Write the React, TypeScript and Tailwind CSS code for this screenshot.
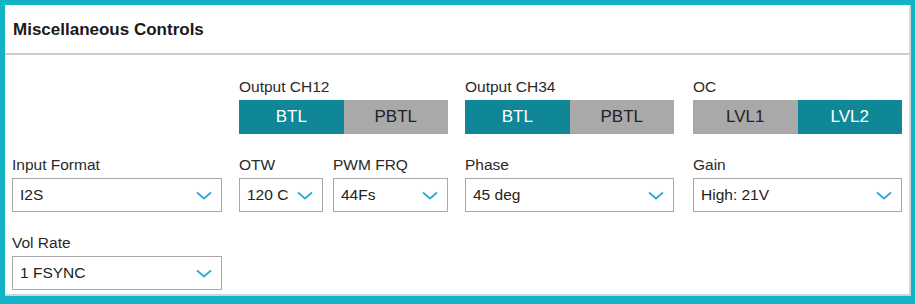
import React from "react";

const font = { fontFamily: '"Liberation Sans", Arial, sans-serif' };

function Chevron() {
  return (
    <svg width="16" height="9" viewBox="0 0 16 9" className="shrink-0">
      <path d="M1 1.5 L8 7.5 L15 1.5" fill="none" stroke="#2ea8dd" strokeWidth="1.8" />
    </svg>
  );
}

function Select({ value, w }: { value: string; w: string }) {
  return (
    <div className={`${w} h-[34px] border border-[#a8a8a8] bg-white flex items-center justify-between pl-[7px] pr-[9px] text-[15.5px] text-[#222]`}>
      <span>{value}</span>
      <Chevron />
    </div>
  );
}

function Label({ children }: { children: React.ReactNode }) {
  return <div className="h-[18px] leading-[18px] text-[15.5px] text-[#2a2a2a] mb-[4px]">{children}</div>;
}

function Toggle({ a, b, active }: { a: string; b: string; active: 0 | 1 }) {
  const on = "bg-[#0f8796] text-white";
  const off = "bg-[#a9a9a9] text-[#222]";
  return (
    <div className="flex h-[34px] w-[209px] text-[17px]">
      <div className={`flex-1 flex items-center justify-center ${active === 0 ? on : off}`}>{a}</div>
      <div className={`flex-1 flex items-center justify-center ${active === 1 ? on : off}`}>{b}</div>
    </div>
  );
}

export default function App() {
  return (
    <div style={font} className="w-[915px] h-[304px] bg-[#12b3c4] pt-[5px] pl-[5px] pr-[4px] pb-[8px]">
      <div className="w-full h-full bg-white border-r-2 border-b-2 border-[#cfd6d8] flex flex-col">
        <div className="h-[50px] shrink-0 pt-[15px] pl-[8px] leading-[20px] text-[17px] font-bold text-[#1a1a1a] border-b-2 border-[#cccccc]">
          Miscellaneous Controls
        </div>
        <div className="pl-[7px] pt-[23px] flex flex-col gap-[22px]">
          <div className="flex">
            <div className="w-[210px]" />
            <div className="ml-[17px]">
              <Label>Output CH12</Label>
              <Toggle a="BTL" b="PBTL" active={0} />
            </div>
            <div className="ml-[17px]">
              <Label>Output CH34</Label>
              <Toggle a="BTL" b="PBTL" active={0} />
            </div>
            <div className="ml-[19px]">
              <Label>OC</Label>
              <Toggle a="LVL1" b="LVL2" active={1} />
            </div>
          </div>
          <div className="flex">
            <div className="w-[210px]">
              <Label>Input Format</Label>
              <Select value="I2S" w="w-[210px]" />
            </div>
            <div className="ml-[17px] w-[209px] flex gap-[10px]">
              <div>
                <Label>OTW</Label>
                <Select value="120 C" w="w-[84px]" />
              </div>
              <div>
                <Label>PWM FRQ</Label>
                <Select value="44Fs" w="w-[115px]" />
              </div>
            </div>
            <div className="ml-[17px]">
              <Label>Phase</Label>
              <Select value="45 deg" w="w-[209px]" />
            </div>
            <div className="ml-[19px]">
              <Label>Gain</Label>
              <Select value="High: 21V" w="w-[209px]" />
            </div>
          </div>
          <div className="flex">
            <div className="w-[210px]">
              <Label>Vol Rate</Label>
              <Select value="1 FSYNC" w="w-[210px]" />
            </div>
          </div>
        </div>
      </div>
    </div>
  );
}
